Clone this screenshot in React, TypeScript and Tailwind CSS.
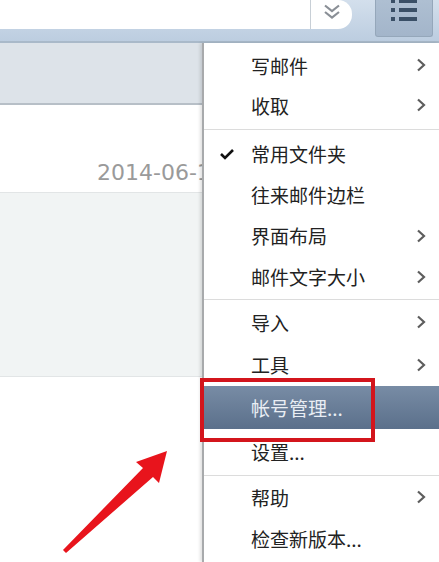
import React from "react";

const cjk = { fontFamily: '"Noto Sans CJK SC", "Noto Sans", sans-serif' };

function Chevron({ light }: { light?: boolean }) {
  return (
    <svg width="10" height="14" viewBox="0 0 10 14" className="absolute left-[212px] top-1/2 -translate-y-1/2">
      <polyline
        points="2,1.5 8,7 2,12.5"
        fill="none"
        stroke={light ? "#e6ecf3" : "#5d5d5d"}
        strokeWidth="2.2"
        strokeLinejoin="miter"
      />
    </svg>
  );
}

type Item = { label: string; h: string; sub?: boolean; check?: boolean; active?: boolean };

const groups: Item[][] = [
  [
    { label: "写邮件", h: "h-[40px]", sub: true },
    { label: "收取", h: "h-[40px]", sub: true },
  ],
  [
    { label: "常用文件夹", h: "h-[41px]", check: true },
    { label: "往来邮件边栏", h: "h-[41px]" },
    { label: "界面布局", h: "h-[41px]", sub: true },
    { label: "邮件文字大小", h: "h-[41px]", sub: true },
  ],
  [
    { label: "导入", h: "h-[42px]", sub: true },
    { label: "工具", h: "h-[43px]", sub: true },
    { label: "帐号管理...", h: "h-[43px]", active: true },
    { label: "设置...", h: "h-[44px]" },
  ],
  [
    { label: "帮助", h: "h-[40px]", sub: true },
    { label: "检查新版本...", h: "h-[42px]" },
  ],
];

function MenuRow({ item }: { item: Item }) {
  return (
    <div
      className={`relative flex items-center pl-[47px] text-[19px] ${item.h} ${
        item.active ? "bg-gradient-to-b from-[#788ca5] to-[#5b708b] text-[#e9eef4]" : "text-[#222]"
      }`}
    >
      {item.check && (
        <svg width="16" height="12" viewBox="0 0 16 12" className="absolute left-[15px] top-1/2 -translate-y-1/2">
          <polyline points="2,6 6,10 14,2" fill="none" stroke="#111" strokeWidth="2.6" />
        </svg>
      )}
      <span className="leading-none">{item.label}</span>
      {item.sub && <Chevron light={item.active} />}
    </div>
  );
}

export default function App() {
  return (
    <div className="relative h-[562px] w-[439px] overflow-hidden bg-white" style={cjk}>
      {/* toolbar */}
      <div className="relative h-[43px] border-b-2 border-[#a9b9c9] bg-gradient-to-b from-[#d3dfec] to-[#bccde0]">
        <div className="absolute left-0 top-0 flex h-[29px] w-[352px] rounded-br-[14px] rounded-tr-[14px] bg-white">
          <div className="flex-1" />
          <div className="flex w-[42px] items-start justify-center border-l border-[#c8cfd6] pt-[4px]">
            <svg width="18" height="16" viewBox="0 0 18 16">
              <polyline points="2,1.5 9,7 16,1.5" fill="none" stroke="#8a8f96" strokeWidth="2.2" />
              <polyline points="2,8 9,13.5 16,8" fill="none" stroke="#8a8f96" strokeWidth="2.2" />
            </svg>
          </div>
        </div>
        <div className="absolute left-[375px] top-0 flex h-[37px] w-[58px] flex-col items-center gap-[5px] rounded-b-[3px] border border-t-0 border-[#95a7ba] bg-gradient-to-b from-[#aebfd2] to-[#a3b5ca]">
          {[0, 1, 2].map((i) => (
            <div key={i} className={`flex items-center gap-[4px] ${i === 0 ? "-mt-[1px]" : ""}`}>
              <div className="h-[4px] w-[4px] bg-[#3a4f66]" />
              <div className="h-[4px] w-[18px] bg-[#3a4f66]" />
            </div>
          ))}
        </div>
      </div>

      {/* content behind menu */}
      <div className="h-[62px] border-b-2 border-[#b7bfc7] bg-[#dde3e9]" />
      <div className="flex h-[88px] items-center border-b border-[#e2e5e6] pl-[97px] pt-[48px]">
        <span className="whitespace-nowrap text-[22px] leading-none text-[#9a9a9a]" style={{ fontFamily: '"DejaVu Sans", sans-serif' }}>
          2014-06-18
        </span>
      </div>
      <div className="h-[184px] border-b border-[#e2e5e6] bg-[#f1f4f4]" />

      {/* dropdown menu */}
      <div className="absolute bottom-0 left-[202px] right-0 top-[43px] border-l-2 border-[#a8aaac] bg-white pt-[2px] shadow-[-2px_0_3px_rgba(0,0,0,0.12)]">
        {groups.map((g, gi) => (
          <div key={gi}>
            {gi > 0 && (
              <div className={`flex items-center ${gi === 1 ? "h-[8px]" : "h-[4px]"}`}>
                <div className="h-[1px] w-full bg-[#dcdcdc]" />
              </div>
            )}
            {g.map((it) => (
              <MenuRow key={it.label} item={it} />
            ))}
          </div>
        ))}
      </div>

      {/* annotation */}
      <div className="absolute left-[200px] top-[378px] h-[64px] w-[175px] border-[4px] border-[#d3151c]" />
      <svg className="absolute left-0 top-0" width="439" height="562" viewBox="0 0 439 562">
        <polygon
          points="63,550 143,468 136,462 167,451 159,483 153,477 66,553"
          fill="#e8141c"
        />
      </svg>
    </div>
  );
}
